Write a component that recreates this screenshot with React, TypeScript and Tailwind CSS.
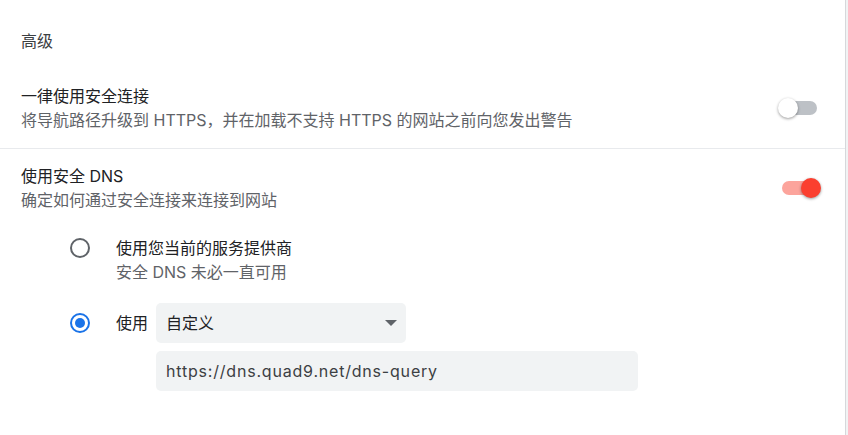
import React, { useState } from "react";

const Toggle = ({ on }: { on: boolean }) => {
  return (
    <div className="relative w-[44px] h-[20px] flex items-center">
      <span
        className={
          on
            ? "absolute left-[5px] w-[34px] h-[14px] rounded-full bg-[#fca49c]"
            : "absolute left-[5px] w-[34px] h-[14px] rounded-full bg-[#bdc1c6]"
        }
      />
      <span
        className={
          on
            ? "absolute right-0 size-[20px] rounded-full bg-[#fb3f2f] shadow-[0_1px_3px_rgba(0,0,0,0.4)]"
            : "absolute left-0 size-[20px] rounded-full bg-white shadow-[0_1px_3px_rgba(0,0,0,0.4)]"
        }
      />
    </div>
  );
};

const Radio = ({ checked }: { checked: boolean }) => {
  return checked ? (
    <span className="size-[20px] rounded-full border-[2px] border-[#1a73e8] flex items-center justify-center shrink-0">
      <span className="size-[10px] rounded-full bg-[#1a73e8]" />
    </span>
  ) : (
    <span className="size-[20px] rounded-full border-[2px] border-[#5f6368] shrink-0" />
  );
};

const App = () => {
  const [dnsOn] = useState(true);
  return (
    <div className="w-[848px] h-[435px] bg-[#f1f3f4] flex font-['Inter','Noto_Sans_CJK_SC',sans-serif] text-[16px] leading-6">
      <div className="w-[846px] h-full bg-white border-r border-[#d6d8db]">
        <div className="pl-[21px] pt-[29px] text-[#3c4043]">高级</div>

        <div className="flex items-center justify-between pl-[21px] pr-[23px] pt-[31px] pb-[16px]">
          <div>
            <div className="text-[#202124]">一律使用安全连接</div>
            <div className="text-[#5f6368]">
              将导航路径升级到 HTTPS，并在加载不支持 HTTPS 的网站之前向您发出警告
            </div>
          </div>
          <Toggle on={false} />
        </div>

        <div className="border-t border-[#e8eaed]" />

        <div className="flex items-center justify-between pl-[21px] pr-[24px] pt-[15px]">
          <div>
            <div className="text-[#202124]">使用安全 DNS</div>
            <div className="text-[#5f6368]">确定如何通过安全连接来连接到网站</div>
          </div>
          <Toggle on={dnsOn} />
        </div>

        <div className="pl-[70px] pt-6 flex flex-col gap-[19px]">
          <div className="flex items-start gap-[26px]">
            <div className="h-6 flex items-center">
              <Radio checked={false} />
            </div>
            <div>
              <div className="text-[#202124]">使用您当前的服务提供商</div>
              <div className="text-[#5f6368]">安全 DNS 未必一直可用</div>
            </div>
          </div>

          <div className="flex items-start gap-[26px]">
            <div className="h-[40px] flex items-center">
              <Radio checked={true} />
            </div>
            <div className="flex flex-col gap-[8px]">
              <div className="flex items-center gap-[8px]">
                <span className="text-[#202124]">使用</span>
                <div className="w-[250px] h-[40px] rounded-[5px] bg-[#f1f3f4] flex items-center justify-between pl-[10px] pr-[9px] text-[#202124]">
                  <span>自定义</span>
                  <span className="w-0 h-0 border-l-[6px] border-r-[6px] border-t-[6px] border-l-transparent border-r-transparent border-t-[#5f6368]" />
                </div>
              </div>
              <div className="ml-[40px] w-[482px] h-[40px] rounded-[5px] bg-[#f1f3f4] flex items-center pl-[10px] text-[#3c4043] tracking-[0.8px]">
                https://dns.quad9.net/dns-query
              </div>
            </div>
          </div>
        </div>
      </div>
    </div>
  );
};

export default App;
